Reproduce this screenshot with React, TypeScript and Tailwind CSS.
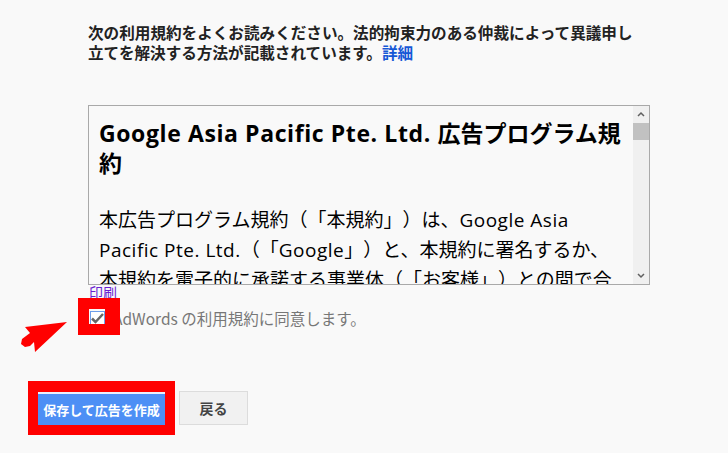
import React from "react";

const jp = { fontFamily: '"Noto Sans CJK JP", sans-serif' };
const latin = { fontFamily: '"Open Sans", "Noto Sans CJK JP", sans-serif' };

export default function App() {
  return (
    <div className="relative h-[453px] w-full overflow-hidden bg-[#f9f9f9] pl-[88px] pt-[22px] [text-spacing-trim:space-all]" style={jp}>
      {/* 案内文 */}
      <p className="w-[600px] text-[15.6px] font-bold leading-[20px] text-[#222]">
        次の利用規約をよくお読みください。法的拘束力のある仲裁によって異議申し
        <br />
        立てを解決する方法が記載されています。
        <a href="#" className="text-[#1558d6]">詳細</a>
      </p>

      {/* 規約ボックス */}
      <div className="mt-[43px] flex h-[180px] w-[562px] border border-[#a9a9a9] bg-[#f9f9f9]">
        <div className="flex-1 overflow-hidden pl-[10px] pr-[7px] pt-[12px] text-black" style={latin}>
          <h1 className="text-[23px] font-bold leading-[30px]">
            <span className="tracking-[0.6px]">Google Asia Pacific Pte. Ltd. </span>広告プログラム規約
          </h1>
          <p className="mt-[27px] text-[19px] leading-[30px]">
            本広告プログラム規約（「本規約」）は、<span className="tracking-[0.5px]">Google Asia Pacific Pte. Ltd.</span>（「<span className="tracking-[0.5px]">Google</span>」）と、本規約に署名するか、本規約を電子的に承諾する事業体（「お客様」）との間で合意されるものです。
          </p>
        </div>
        <div className="flex w-[16px] flex-col items-center bg-[#f0f0f0]">
          <svg width="16" height="17" viewBox="0 0 16 17">
            <path d="M5 10 L8 7 L11 10" fill="none" stroke="#606060" strokeWidth="1.5" />
          </svg>
          <div className="h-[17px] w-[16px] bg-[#c1c1c1]" />
          <div className="flex-1" />
          <svg width="16" height="17" viewBox="0 0 16 17">
            <path d="M5 7 L8 10 L11 7" fill="none" stroke="#606060" strokeWidth="1.5" />
          </svg>
        </div>
      </div>

      <a href="#" className="block w-fit pl-[1px] text-[14px] leading-[14px] text-[#6a1fd0] underline">印刷</a>

      {/* 同意チェック */}
      <label className="mt-[9px] flex items-center gap-[8px]">
        <span className="ml-[2px] flex h-[15px] w-[15px] items-center justify-center border border-[#6d9eeb] bg-white">
          <svg width="13" height="11" viewBox="0 0 13 11">
            <path d="M1 5.5 L4.5 9 L12 1" fill="none" stroke="#666" strokeWidth="2.5" />
          </svg>
        </span>
        <span className="text-[15.5px] leading-[20px] text-[#777]">AdWords の利用規約に同意します。</span>
      </label>

      {/* ボタン */}
      <div className="-ml-[60px] mt-[53px] flex items-center gap-[4px]">
        <div className="bg-[#ff0000] p-[10px] pt-[11px]">
          <button className="h-[33px] w-[127px] border-t-2 border-[#e8f0fe] bg-[#4d8ff5] text-[13px] font-bold text-white">
            保存して広告を作成
          </button>
        </div>
        <button className="h-[34px] w-[69px] border border-[#dcdcdc] bg-[#f1f1f1] text-[14px] font-bold text-[#444]">
          戻る
        </button>
      </div>

      {/* 注釈: チェックボックスの赤枠 */}
      <div className="absolute left-[78px] top-[298px] h-[37px] w-[42px] border-[11px] border-r-[15px] border-[#ff0000]" />

      {/* 注釈: 赤い矢印 */}
      <svg className="absolute left-0 top-0" width="728" height="453">
        <polygon
          points="67,322 25,327 30,333 22,339 21,344 25,347 30,346 34,342 35,352"
          fill="#ff0000"
        />
      </svg>
    </div>
  );
}
